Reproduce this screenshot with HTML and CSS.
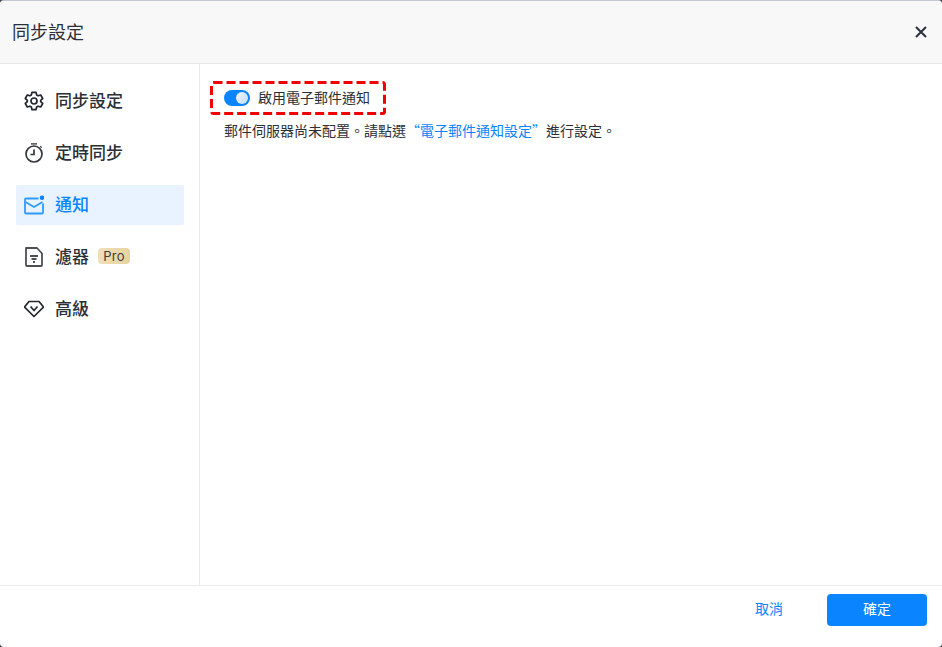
FILE: index.html
```html
<!DOCTYPE html>
<html lang="zh-Hant">
<head>
<meta charset="utf-8">
<title>同步設定</title>
<link rel="stylesheet" href="styles.css">
</head>
<body>
<div class="dialog">
  <header class="head">
    <h1 class="title">同步設定</h1>
    <button class="close" aria-label="close">
      <svg width="14" height="14" viewBox="0 0 14 14"><path d="M2 2L12 12M12 2L2 12" stroke="#2b323b" stroke-width="2" fill="none"/></svg>
    </button>
  </header>
  <div class="main">
    <nav class="side">
      <a class="item">
        <svg class="ico" viewBox="0 0 20 20" fill="none" stroke="#23282e" stroke-width="1.700" stroke-linejoin="round"><path d="M8 1.300h4l.6 2.600 1.500.9 2.600-.8 2 3.500-2 1.800v1.400l2 1.800-2 3.500-2.600-.8-1.500.9-.6 2.600H8l-.6-2.600-1.500-.9-2.600.8-2-3.500 2-1.800V9.300l-2-1.800 2-3.500 2.600.8 1.500-.9z"/><circle cx="10" cy="10" r="3"/></svg>
        <span class="txt">同步設定</span>
      </a>
      <a class="item">
        <svg class="ico" viewBox="0 0 20 20" fill="none" stroke="#33383e" stroke-width="1.700"><path d="M7 .9h6" stroke="#666"/><circle cx="10" cy="11" r="8"/><path d="M10 6.500V11.500H6.500"/><path d="M16.300 3.200l1.400 1.400" stroke-width="1.300"/></svg>
        <span class="txt">定時同步</span>
      </a>
      <a class="item active">
        <svg class="ico" viewBox="0 0 20 20" fill="none" stroke="#2f9bff" stroke-width="1.800"><path d="M14.500 3.500H2a1 1 0 0 0-1 1v13a1 1 0 0 0 1 1h16a1 1 0 0 0 1-1V8.500"/><path d="M1.500 7L10 12L18.500 7"/><circle cx="18" cy="2.700" r="2.300" fill="#0a84ff" stroke="none"/></svg>
        <span class="txt">通知</span>
      </a>
      <a class="item">
        <svg class="ico" viewBox="0 0 20 20" fill="none" stroke="#4c5056" stroke-width="1.800" stroke-linejoin="round"><path d="M2 1h11l5 5.500V18a1 1 0 0 1-1 1H3a1 1 0 0 1-1-1z"/><path d="M6 9h8M7.500 12h5M9 15h2"/></svg>
        <span class="txt">濾器</span>
        <span class="pro">Pro</span>
      </a>
      <a class="item">
        <svg class="ico" viewBox="0 0 20 20" fill="none" stroke="#23282e" stroke-width="1.700" stroke-linejoin="round"><path d="M5 2.500h10l4.500 5.500L10 17.500.5 8z"/><path d="M6.500 7.500L10 11.500l3.500-4"/></svg>
        <span class="txt">高級</span>
      </a>
    </nav>
    <section class="content">
      <div class="mark">
        <span class="switch"><span class="knob"></span></span>
        <span class="label">啟用電子郵件通知</span>
        <svg class="dash" width="176" height="34" viewBox="0 0 176 34"><rect x="1.500" y="1.500" width="173" height="31" rx="2" fill="none" stroke="#f00000" stroke-width="3" stroke-dasharray="9 4"/></svg>
      </div>
      <p class="note">郵件伺服器尚未配置。請點選<a class="link">“電子郵件通知設定”</a>進行設定。</p>
    </section>
  </div>
  <footer class="foot">
    <button class="cancel">取消</button>
    <button class="ok">確定</button>
  </footer>
</div>
</body>
</html>
```
FILE: styles.css
```css
* { box-sizing: border-box; }
html, body { margin: 0; height: 100%; }
body {
  background: #3a3f4a;
  font-family: "Noto Sans CJK TC", "Liberation Sans", sans-serif;
  color: #2b2f36;
  overflow: hidden;
}
.dialog {
  width: 942px;
  height: 647px;
  display: flex;
  flex-direction: column;
  background: #fff;
  border-top: 1px solid #c4c8d0;
  border-radius: 4px;
  overflow: hidden;
}
.head {
  height: 63px;
  flex: none;
  display: flex;
  align-items: center;
  justify-content: space-between;
  padding: 0 14px 0 12px;
  background: #f8f8f9;
  border-bottom: 1px solid #e6e7e9;
}
.title { margin: 0 0 2px; font-size: 18px; font-weight: 400; line-height: 24px; color: #2b2f36; }
.close { width: 14px; height: 14px; padding: 0; border: 0; background: none; display: flex; }
.main { flex: 1; display: flex; min-height: 0; }
.side {
  width: 200px;
  flex: none;
  padding: 17px 15px 0 16px;
  border-right: 1px solid #e8e9eb;
  display: flex;
  flex-direction: column;
  gap: 12px;
}
.item {
  height: 40px;
  display: flex;
  align-items: center;
  padding-left: 8px;
  border-radius: 2px;
  font-size: 17px;
  font-weight: 500;
  color: #2b2f36;
}
.txt { padding-bottom: 4px; }
.ico { width: 20px; height: 20px; margin-right: 11px; flex: none; }
.item.active { background: #e8f3ff; color: #0a84ff; }
.pro {
  margin: 0 0 2px 9px;
  width: 32px;
  height: 16px;
  text-align: center;
  border-radius: 4px;
  background: linear-gradient(90deg, #efe0b8, #e6d3a0);
  font: 13px/16px "Inter", "Liberation Sans", sans-serif;
  letter-spacing: 0.3px;
  color: #3d3d3b;
}
.content { flex: 1; padding: 17px 10px; }
.mark {
  width: 176px;
  height: 34px;
  display: flex;
  align-items: center;
  padding: 0 0 1px 14px;
  position: relative;
}
.dash { position: absolute; left: 0; top: 0; }
.switch {
  width: 26px;
  height: 16px;
  border-radius: 8px;
  background: #0a84ff;
  position: relative;
  margin-right: 8px;
}
.knob {
  position: absolute;
  right: 2px;
  top: 2px;
  width: 12px;
  height: 12px;
  border-radius: 50%;
  background: linear-gradient(135deg, #f2f8ff, #c2ddfa);
}
.label { font-size: 14px; color: #2b2f36; padding-bottom: 2px; }
.note { margin: 5px 0 0 14px; font-size: 14px; line-height: 20px; color: #2b2f36; }
.link { color: #0a84ff; }
.foot {
  height: 62px;
  flex: none;
  display: flex;
  align-items: flex-start;
  justify-content: flex-end;
  padding: 8px 15px 0 0;
  border-top: 1px solid #e8e9eb;
}
button { font-family: inherit; cursor: pointer; }
.cancel { height: 32px; border: 0; background: none; color: #0a84ff; font-size: 14px; padding: 0 0 4px; margin-right: 44px; }
.ok { width: 100px; height: 32px; border: 0; border-radius: 4px; background: #0a84ff; color: #fff; font-size: 14px; padding: 0 0 4px; }
```
